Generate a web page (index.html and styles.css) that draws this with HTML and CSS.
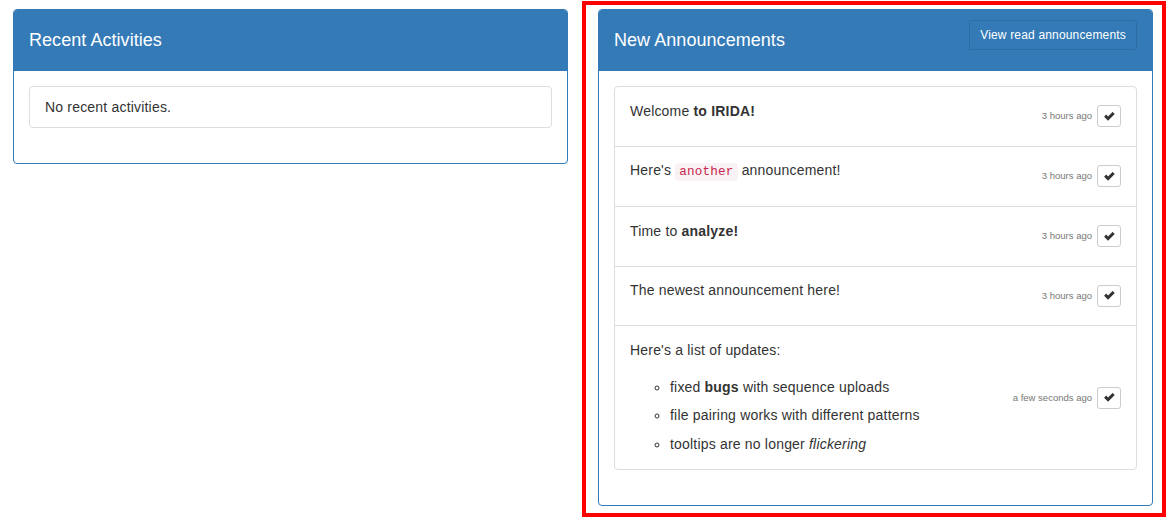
FILE: index.html
```html
<!DOCTYPE html>
<html lang="en">
<head>
<meta charset="utf-8">
<title>Dashboard</title>
<link rel="stylesheet" href="styles.css">
</head>
<body>
<div class="row">
  <div class="col col-left">
    <div class="panel">
      <div class="panel-heading">
        <h3 class="panel-title">Recent Activities</h3>
      </div>
      <div class="panel-body">
        <ul class="list-group">
          <li class="list-group-item">No recent activities.</li>
        </ul>
      </div>
    </div>
  </div>
  <div class="col col-highlight">
    <div class="panel">
      <div class="panel-heading">
        <h3 class="panel-title">New Announcements</h3>
        <button class="btn-read" type="button">View read announcements</button>
      </div>
      <div class="panel-body">
        <ul class="list-group">
          <li class="list-group-item">
            <div class="ann">
              <div class="msg"><p>Welcome <strong>to IRIDA!</strong></p></div>
              <div class="meta"><span class="time">3 hours ago</span><button class="btn-ok" type="button"><svg width="11" height="9" viewBox="0 0 12 10"><polygon points="0,5.2 2.3,2.9 4.4,5 9.5,-0.1 11.8,2.2 4.4,9.6" fill="#333"/></svg></button></div>
            </div>
          </li>
          <li class="list-group-item">
            <div class="ann">
              <div class="msg"><p>Here's <code>another</code> announcement!</p></div>
              <div class="meta"><span class="time">3 hours ago</span><button class="btn-ok" type="button"><svg width="11" height="9" viewBox="0 0 12 10"><polygon points="0,5.2 2.3,2.9 4.4,5 9.5,-0.1 11.8,2.2 4.4,9.6" fill="#333"/></svg></button></div>
            </div>
          </li>
          <li class="list-group-item">
            <div class="ann">
              <div class="msg"><p>Time to <strong>analyze!</strong></p></div>
              <div class="meta"><span class="time">3 hours ago</span><button class="btn-ok" type="button"><svg width="11" height="9" viewBox="0 0 12 10"><polygon points="0,5.2 2.3,2.9 4.4,5 9.5,-0.1 11.8,2.2 4.4,9.6" fill="#333"/></svg></button></div>
            </div>
          </li>
          <li class="list-group-item">
            <div class="ann">
              <div class="msg"><p>The newest announcement here!</p></div>
              <div class="meta"><span class="time">3 hours ago</span><button class="btn-ok" type="button"><svg width="11" height="9" viewBox="0 0 12 10"><polygon points="0,5.2 2.3,2.9 4.4,5 9.5,-0.1 11.8,2.2 4.4,9.6" fill="#333"/></svg></button></div>
            </div>
          </li>
          <li class="list-group-item">
            <div class="ann">
              <div class="msg">
                <p>Here's a list of updates:</p>
                <ul class="updates">
                  <li>fixed <strong>bugs</strong> with sequence uploads</li>
                  <li>file pairing works with different patterns</li>
                  <li>tooltips are no longer <em>flickering</em></li>
                </ul>
              </div>
              <div class="meta"><span class="time">a few seconds ago</span><button class="btn-ok" type="button"><svg width="11" height="9" viewBox="0 0 12 10"><polygon points="0,5.2 2.3,2.9 4.4,5 9.5,-0.1 11.8,2.2 4.4,9.6" fill="#333"/></svg></button></div>
            </div>
          </li>
        </ul>
      </div>
    </div>
  </div>
</div>
</body>
</html>
```

FILE: styles.css
```css
html, body {
  margin: 0;
  background: #fff;
}
body {
  font-family: "Liberation Sans", Arial, sans-serif;
  font-size: 14px;
  line-height: 20px;
  letter-spacing: 0.19px;
  color: #333;
}
.row {
  display: flex;
  align-items: flex-start;
  padding-left: 13px;
}
.col-left {
  width: 555px;
  margin-top: 9px;
}
.col-highlight {
  margin-left: 14px;
  margin-top: 1px;
  border: 4px solid #ff0000;
  padding: 4px 9px 7px 12px;
}
.panel {
  width: 555px;
  box-sizing: border-box;
  border: 1px solid #337ab7;
  border-radius: 4px;
  background: #fff;
}
.panel-heading {
  display: flex;
  justify-content: space-between;
  align-items: flex-start;
  padding: 15px;
  background: #337ab7;
  border-bottom: 1px solid #337ab7;
  border-radius: 3px 3px 0 0;
  color: #fff;
}
.panel-title {
  margin: 0;
  font-size: 18px;
  line-height: 30px;
  font-weight: normal;
  letter-spacing: 0.05px;
}
.btn-read {
  margin-top: -5px;
  font-family: "Liberation Sans", Arial, sans-serif;
  font-size: 12px;
  line-height: 18px;
  letter-spacing: 0.17px;
  padding: 5px 10px;
  color: #fff;
  background: #337ab7;
  border: 1px solid #2e6da4;
  border-radius: 3px;
}
.panel-body {
  padding: 15px;
}
.list-group {
  list-style: none;
  margin: 0 0 20px;
  padding: 0;
}
.list-group-item {
  border: 1px solid #ddd;
  margin-bottom: -1px;
  padding: 10px 15px;
  background: #fff;
}
.list-group-item:first-child {
  border-radius: 4px 4px 0 0;
}
.list-group-item:last-child {
  border-radius: 0 0 4px 4px;
  margin-bottom: 0;
}
.list-group-item:only-child {
  border-radius: 4px;
}
.ann {
  display: flex;
  align-items: center;
  min-height: 38.5px;
}
.msg {
  flex: 1;
  align-self: flex-start;
  padding: 3.5px 0 5.5px;
}
.msg p {
  margin: 0 0 8.5px;
}
.updates {
  margin: 0;
  padding-left: 40px;
  list-style: circle;
}
.updates li {
  padding-top: 8.5px;
}
.meta {
  display: flex;
  align-items: center;
  gap: 5px;
}
.time {
  font-size: 9.5px;
  letter-spacing: 0;
  color: #777;
}
.btn-ok {
  width: 24px;
  height: 22px;
  padding: 0;
  border: 1px solid #ccc;
  border-radius: 3px;
  background: #fff;
  display: flex;
  align-items: center;
  justify-content: center;
}
code {
  font-family: "Liberation Mono", "DejaVu Sans Mono", monospace;
  font-size: 90%;
  letter-spacing: 0.2px;
  padding: 2px 4px;
  color: #c7254e;
  background: #f9f2f4;
  border-radius: 4px;
}
```
